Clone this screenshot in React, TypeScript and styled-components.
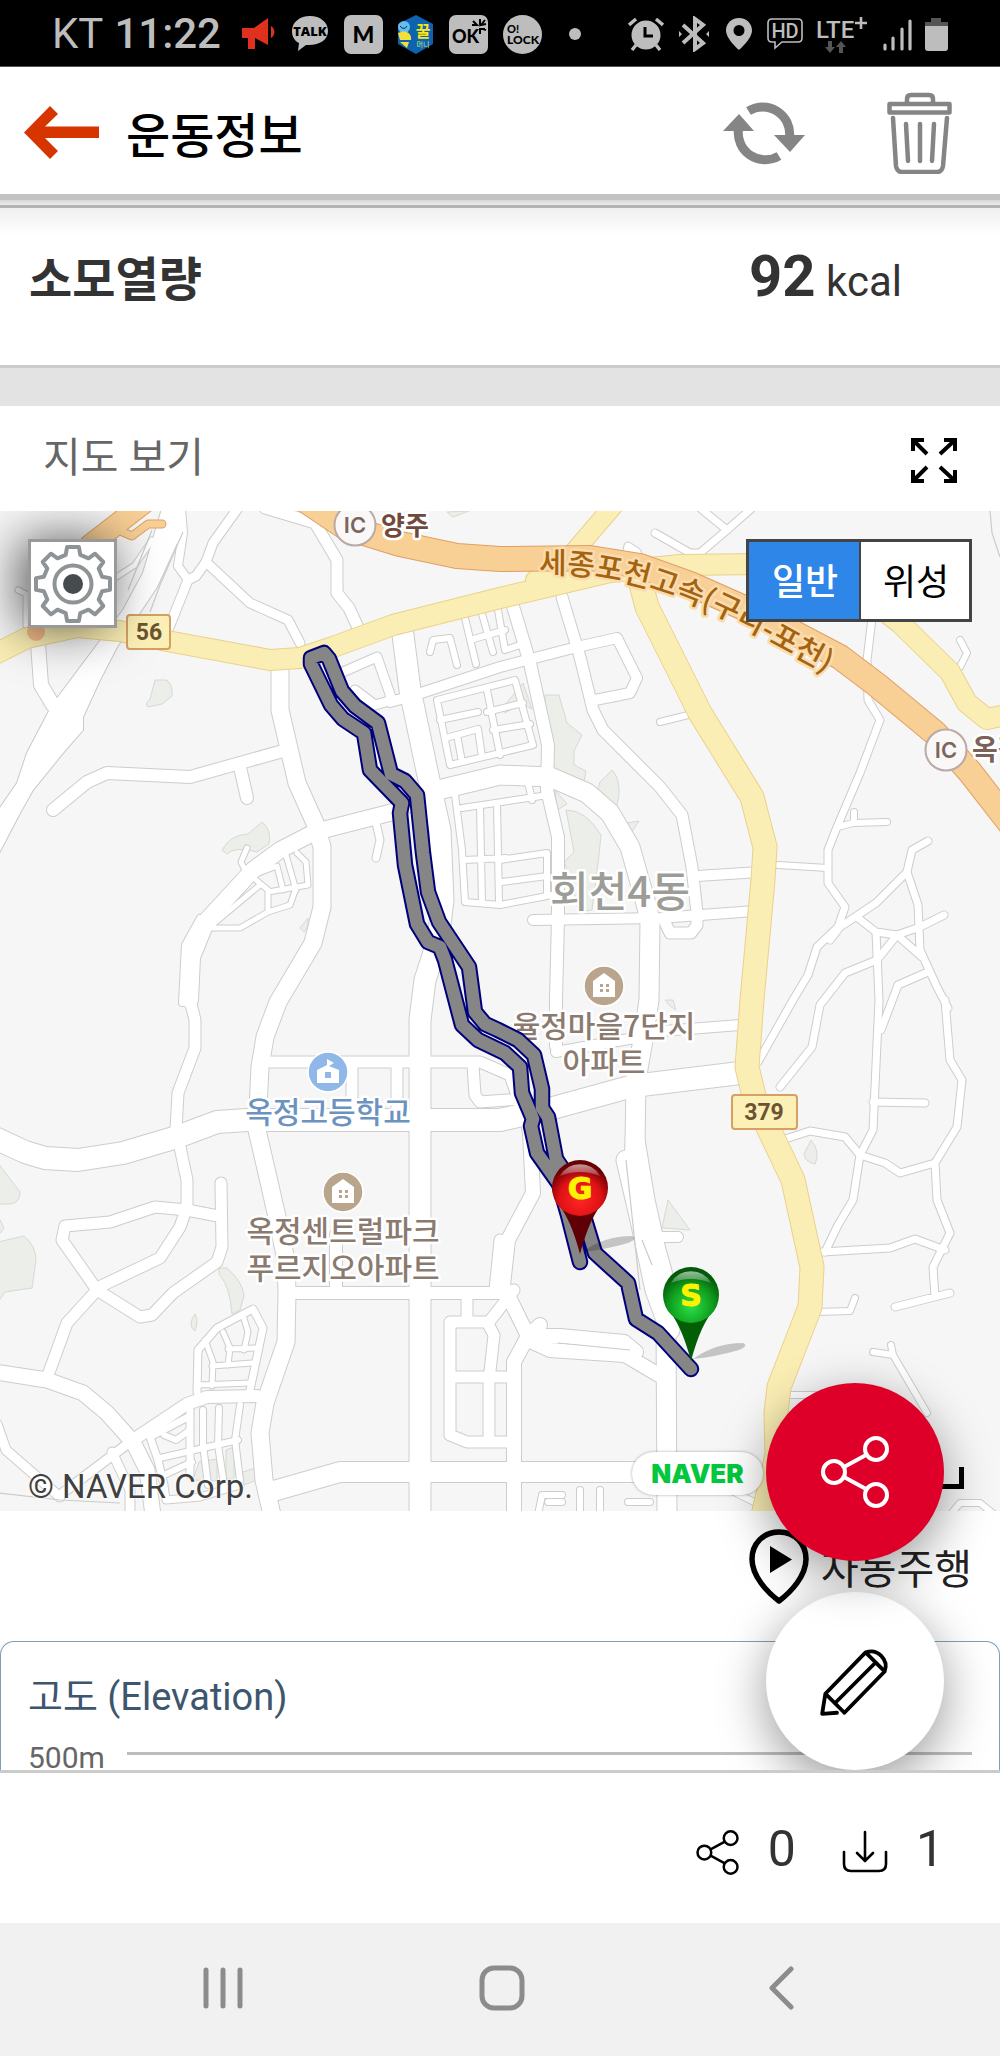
import React, { useState } from 'react';
import styled, { createGlobalStyle, css } from 'styled-components';

const sans = `Roboto, "Noto Sans CJK KR", sans-serif`;

const GlobalStyle = createGlobalStyle`
  *, *::before, *::after { box-sizing: border-box; }
  body { margin: 0; background: #fff; font-family: ${sans}; color: #333; }
  button { font: inherit; color: inherit; margin: 0; padding: 0; border: 0; background: none; cursor: pointer; }
  svg { display: block; flex: none; }
`;

/* ---------- shell ---------- */

const Screen = styled.div`
  display: flex;
  flex-direction: column;
  min-height: 100vh;
`;

const StatusBar = styled.div`
  display: flex;
  justify-content: space-between;
  align-items: center;
  height: 67px;
  padding: 2px 52px 0;
  background: #000;
  border-bottom: 1px solid #555;
  color: #bdbdbd;
  font-size: 42px;
  line-height: 48px;
`;

const StatusGroup = styled.div<{ $gap: number }>`
  display: flex;
  align-items: center;
  gap: ${(p) => p.$gap}px;
`;

const Carrier = styled.span`
  display: flex;
  gap: 11px;
  margin-right: 6px;
  strong { font-weight: 500; }
`;

const AppBar = styled.header`
  display: flex;
  align-items: center;
  height: 127px;
  padding: 4px 47px 0 24px;
  background: #fff;
`;

const Title = styled.h1`
  flex: 1;
  margin: 0 0 0 27px;
  padding-top: 8px;
  color: #000;
  font-size: 48px;
  line-height: 64px;
  font-weight: 500;
`;

const BarActions = styled.div`
  display: flex;
  align-items: center;
  gap: 82px;
`;

const BarEdge = styled.div`
  height: 14px;
  background: linear-gradient(#c3c3c3 0 6px, #d6d6d6 6px, #ececec 11px, #b3b3b3 11px 14px);
`;

const Content = styled.main`
  position: relative;
  overflow: hidden;
`;

/* ---------- sections ---------- */

const CalorieRow = styled.section`
  display: flex;
  justify-content: space-between;
  align-items: baseline;
  height: 160px;
  padding: 36px 98px 0 29px;
  border-bottom: 3px solid #cbcbcb;
  background: linear-gradient(#f0f0f0, #fff 28px);
`;

const RowLabel = styled.h2`
  margin: 0;
  font-size: 47px;
  line-height: 64px;
  font-weight: 700;
`;

const Amount = styled.p`
  margin: 0;
  font-size: 42px;
  line-height: 64px;
  strong { font-size: 58px; }
`;

const Band = styled.div`
  height: 38px;
  background: #e3e3e3;
`;

const MapHeader = styled.div`
  display: flex;
  justify-content: space-between;
  align-items: center;
  height: 105px;
  padding: 0 43px 0 43px;
  color: #666;
  h2 { margin: 0; font-size: 41px; line-height: 56px; font-weight: 400; padding-bottom: 2px; }
  button { color: #000; padding-top: 4px; }
`;

const MapFrame = styled.section`
  position: relative;
  overflow: hidden;
  > svg { width: 100%; height: auto; }
`;

const SettingsButton = styled.button`
  && {
    position: absolute;
    top: 28px;
    left: 28px;
    display: grid;
    place-items: center;
    width: 89px;
    height: 89px;
    border: 3px solid #999;
    background: #fff;
    box-shadow: -8px 0 50px rgba(0, 0, 0, 0.65);
  }
`;

const TypeSwitch = styled.div`
  position: absolute;
  top: 28px;
  right: 28px;
  display: flex;
  border: 3px solid #444;
  background: #fff;
`;

const TypeButton = styled.button<{ $on: boolean }>`
  && {
    width: 110px;
    height: 77px;
    padding: 4px 0 0 2px;
    font-size: 36px;
    line-height: 48px;
    color: #000;
    ${(p) => p.$on && css`
      background: #2e86e8;
      color: #fff;
      font-weight: 500;
    `}
    & + & { border-left: 2px solid #444; }
  }
`;

const Copyright = styled.span`
  position: absolute;
  left: 28px;
  bottom: 4px;
  font-size: 33px;
  line-height: 40px;
  color: #404040;
  text-shadow: 0 0 3px #fff, 0 0 3px #fff;
`;

const NaverLink = styled.a`
  position: absolute;
  right: 237px;
  bottom: 16px;
  width: 131px;
  height: 43px;
  border-radius: 22px;
  background: #fff;
  box-shadow: 0 0 3px rgba(0, 0, 0, 0.35);
  color: #03c73c;
  font-family: Inter, sans-serif;
  font-weight: 900;
  font-size: 26px;
  line-height: 43px;
  text-align: center;
  text-decoration: none;
`;

const ScaleBar = styled.span`
  position: absolute;
  right: 36px;
  bottom: 22px;
  width: 90px;
  height: 22px;
  border: solid #000;
  border-width: 0 5px 5px 5px;
`;

const AutoRun = styled.div`
  display: flex;
  justify-content: flex-end;
  height: 130px;
  padding: 18px 28px 0;
  button {
    display: flex;
    align-items: flex-start;
    gap: 12px;
    height: 76px;
    color: #222;
    font-size: 41px;
    line-height: 82px;
  }
`;

const ElevationCard = styled.section`
  height: 129px;
  overflow: hidden;
  padding: 31px 27px 0;
  border: 1px solid #7f9fb6;
  border-bottom: 0;
  border-radius: 14px 14px 0 0;
  h2 {
    margin: 0;
    color: #3d566e;
    font-size: 38px;
    line-height: 48px;
    font-weight: 400;
  }
`;

const AxisRow = styled.div`
  display: flex;
  gap: 22px;
  margin-top: 17px;
  color: #666;
  font-size: 30px;
  line-height: 40px;
  &::after {
    content: '';
    flex: 1;
    height: 3px;
    margin-top: 14px;
    background: #bdbdbd;
  }
`;

const Fabs = styled.div`
  position: absolute;
  right: 56px;
  bottom: 0;
  display: grid;
  gap: 31px;
`;

const Fab = styled.button<{ $primary?: boolean }>`
  && {
    position: relative;
    z-index: ${(p) => (p.$primary ? 1 : 0)};
    display: grid;
    place-items: center;
    width: 178px;
    height: 178px;
    border-radius: 50%;
    background: ${(p) => (p.$primary ? '#de0029' : '#fff')};
    color: ${(p) => (p.$primary ? '#fff' : '#000')};
    box-shadow: 0 14px 50px rgba(0, 0, 0, 0.4);
  }
`;

const Counters = styled.footer`
  display: flex;
  justify-content: flex-end;
  gap: 46px;
  height: 153px;
  padding: 46px 56px 0 0;
  border-top: 3px solid #cbcbcb;
  background: #fff;
`;

const Counter = styled.button`
  && {
    display: flex;
    align-items: flex-start;
    gap: 28px;
    height: 60px;
    font-size: 50px;
    line-height: 60px;
  }
  svg { margin-top: 11px; color: #000; }
`;

const NavBar = styled.nav`
  display: grid;
  grid-template-columns: repeat(3, 28%);
  justify-content: center;
  height: 133px;
  padding-left: 4px;
  background: #f1f1f1;
  color: #8c8c8c;
  button { display: grid; place-items: center; padding-bottom: 4px; }
`;

/* ---------- status icons ---------- */

const Horn = () => (
  <svg width="34" height="36" viewBox="0 0 34 36" fill="#e0301e">
    <path d="M0 12h12L26 2v27l-13-7v11H6V22H0zM29 10a7 7 0 0 1 0 12z" />
  </svg>
);
const Talk = () => (
  <svg width="38" height="38" viewBox="0 0 38 38">
    <path d="M19 1C9 1 1 7 1 16c0 6 3 10 7 12l-1 8 8-6c13 1 22-5 22-14S29 1 19 1z" fill="#bdbdbd" />
    <text x="19" y="21" fontSize="13" fontWeight="800" textAnchor="middle" fontFamily="Open Sans" fill="#000">TALK</text>
  </svg>
);
const Tile = ({ children }: { children: React.ReactNode }) => (
  <svg width="39" height="39" viewBox="0 0 39 39">
    <rect width="39" height="39" rx="7" fill="#bdbdbd" />
    {children}
  </svg>
);
const Honey = () => (
  <svg width="36" height="39" viewBox="0 0 36 39">
    <path d="M18 0l17 9v20l-17 10L0 29V9z" fill="#0d63b0" />
    <circle cx="6" cy="12" r="6" fill="#62bdf0" />
    <path d="M0 18c8-4 14 0 13 7H2zM2 27h9l-2 6z" fill="#f2df3a" />
    <path d="M2 11q4 5 7 0" stroke="#124" fill="none" />
    <text x="25" y="22" fontSize="16" fontWeight="700" textAnchor="middle" fontFamily="Noto Sans CJK KR" fill="#fbe516">꿀</text>
    <text x="25" y="32" fontSize="7" textAnchor="middle" fontFamily="Noto Sans CJK KR" fill="#cde57a">머니</text>
  </svg>
);
const OkMark = () => (
  <Tile>
    <text x="3" y="28" fontSize="18" fontWeight="900" fontFamily="Lato" fill="#000">OK</text>
    <path d="M24 6l4 4h-5M31 4v6M36 5l-4 5 5-1M31 19v-5h5M34 14l3 1" stroke="#000" strokeWidth="2" fill="none" />
  </Tile>
);
const LockScreen = () => (
  <svg width="39" height="39" viewBox="0 0 39 39" fontFamily="Lato" fontWeight="900">
    <circle cx="19.5" cy="19.5" r="19.5" fill="#bdbdbd" />
    <text x="4" y="18" fontSize="11">O!</text>
    <text x="4" y="29" fontSize="12">LOCK</text>
  </svg>
);
const Dot = () => (
  <svg width="36" height="12" viewBox="0 0 36 12"><circle cx="18" cy="6" r="6" fill="#bdbdbd" /></svg>
);
const Alarm = () => (
  <svg width="36" height="34" viewBox="0 0 36 34" stroke="#bdbdbd" fill="none" strokeWidth="3.4">
    <circle cx="18" cy="18" r="14.5" fill="#bdbdbd" stroke="none" />
    <path d="M1 8l7-6M35 8l-7-6M8 28l-4 5M28 28l4 5" />
    <path d="M17 10v9h8" stroke="#000" strokeWidth="3" />
  </svg>
);
const Bluetooth = () => (
  <svg width="34" height="36" viewBox="0 0 34 36" stroke="#bdbdbd" fill="none" strokeWidth="4">
    <path d="M6 9l20 18-8 6V3l8 6L6 27" />
    <path d="M2 15l3 3-3 3zM32 15l-3 3 3 3z" fill="#bdbdbd" stroke="none" />
  </svg>
);
const Place = () => (
  <svg width="30" height="34" viewBox="-1 0 30 34">
    <path fillRule="evenodd" fill="#bdbdbd" d="M14 1C6 1 1 7 1 13.500C1 22 14 33 14 33s13-11 13-19.500C27 7 22 1 14 1zm0 7a5.500 5.500 0 1 1 0 11 5.500 5.500 0 0 1 0-11z" />
  </svg>
);
const Hd = () => (
  <svg width="36" height="32" viewBox="0 0 36 32">
    <path d="M5 1h26q4 0 4 4v15q0 4-4 4H15l-7 6v-6H5q-4 0-4-4V5q0-4 4-4z" fill="none" stroke="#bdbdbd" strokeWidth="1.600" />
    <text x="18" y="20" fontSize="20" fontWeight="500" textAnchor="middle" fontFamily="Roboto" fill="#bdbdbd">HD</text>
  </svg>
);
const Lte = () => (
  <svg width="54" height="52" viewBox="0 -5 54 52" fontFamily="Roboto">
    <text x="0" y="25" fontSize="24" fontWeight="500" fill="#bdbdbd">LTE</text>
    <path d="M45 4v12M39 10h12" stroke="#bdbdbd" strokeWidth="2.600" />
    <path d="M12 28h4v6h3l-5 6-5-6h3zM23 40h4v-6h3l-5-6-5 6h3z" fill="#555" />
  </svg>
);
const Signal = () => (
  <svg width="29" height="33" viewBox="0 0 29 33" stroke="#bdbdbd" strokeWidth="3.200" strokeLinecap="round">
    <path d="M2 27v4M10 20v11M19 11v20M27 3v28" />
  </svg>
);
const Battery = () => (
  <svg width="23" height="34" viewBox="0 0 23 34">
    <path d="M6 1h10v4h7v4H0V5h6z" fill="#555" />
    <path d="M0 9h23v22q0 3-3 3H3q-3 0-3-3z" fill="#bdbdbd" />
  </svg>
);

/* ---------- app icons ---------- */

const BackArrow = () => (
  <svg width="75" height="53" viewBox="0 0 75 53">
    <path d="M0 26.500L26 0l8 8-13 12.500h54v11.500H21l13 13-8 8z" fill="#d63500" />
  </svg>
);
const Refresh = () => (
  <svg width="82" height="64" viewBox="0 0 82 64" fill="none" stroke="#858585" strokeWidth="9">
    <path d="M25.500 10A27 27 0 0 1 66.500 36" />
    <path d="M56 55A27 27 0 0 1 15.500 28" />
    <path d="M51 34h31L67 51zM0 30l16-17 15 17z" fill="#858585" stroke="none" />
  </svg>
);
const Trash = () => (
  <svg width="66" height="82" viewBox="0 0 66 82" fill="none" stroke="#858585" strokeWidth="4.500" strokeLinecap="round" strokeLinejoin="round">
    <rect x="2.500" y="12" width="60" height="8.500" />
    <path d="M20 11V7q0-4 4-4h18q4 0 4 4v4M6 26l3 48q1 6 6 6h35q5 0 6-6l4-48M19 32l2 37M33 32v37M47 32l-2 37" />
  </svg>
);
const Expand = () => (
  <svg width="46" height="45" viewBox="0 0 46 45" fill="none" stroke="#000" strokeWidth="4">
    <path d="M2 13V2h11M2 2l14 14M33 2h11v11M44 2L29 16M2 32v11h11M2 43l14-14M33 43h11V32M44 43L29 29" />
  </svg>
);
const Gear = () => {
  const teeth = [0, 45, 90, 135, 180, 225, 270, 315];
  const profile = [[-14, 30], [-9, 37.5], [9, 37.5], [14, 30]];
  const pts = teeth.flatMap((a) =>
    profile.map(([d, r]) => {
      const t = ((a + d) * Math.PI) / 180;
      return `${(40 + r * Math.sin(t)).toFixed(1)},${(40 - r * Math.cos(t)).toFixed(1)}`;
    }),
  );
  return (
    <svg width="80" height="80" viewBox="0 0 80 80" fill="none" stroke="#8e9396" strokeWidth="4" strokeLinejoin="round">
      <polygon points={pts.join(' ')} />
      <circle cx="40" cy="40" r="18.500" />
      <circle cx="40" cy="40" r="10" fill="#464b4d" stroke="none" />
    </svg>
  );
};
const Share = ({ size, stroke }: { size: number; stroke: number }) => (
  <svg width={size} height={size} viewBox="0 0 68 72" fill="none" stroke="currentColor" strokeWidth={stroke}>
    <circle cx="13" cy="36" r="11" />
    <circle cx="55" cy="13" r="11" />
    <circle cx="55" cy="59" r="11" />
    <path d="M23 31l22-12M23 41l22 12" />
  </svg>
);
const Pencil = () => (
  <svg width="72" height="72" viewBox="0 0 68 68" fill="none" stroke="#000" strokeWidth="3.600" strokeLinejoin="round" strokeLinecap="round">
    <path d="M6 46L44 7a14 14 0 0 1 18 18L24 64zM6 46L3 65l14-1M44 7l18 18M15 55l38-38" />
  </svg>
);
const PlayPin = () => (
  <svg width="60" height="75" viewBox="0 0 60 75">
    <path d="M30 3C14 3 3 15 3 30c0 17 15 33 27 42 12-9 27-25 27-42C57 15 46 3 30 3z" fill="none" stroke="#000" strokeWidth="5.500" strokeLinejoin="round" />
    <path d="M21 17v27l22-13.500z" />
  </svg>
);
const Download = () => (
  <svg width="46" height="43" viewBox="0 0 46 43" fill="none" stroke="currentColor" strokeWidth="2.600" strokeLinecap="round">
    <path d="M2 22v12q0 7 7 7h28q7 0 7-7V22M23 2v29M15 23l8 8 8-8" />
  </svg>
);

/* ---------- map ---------- */

type Road = [number, string];

const roads: Road[] = [
  [14, 'M38 643L41 685L53 705'],
  [9, 'M238 508L213 543L206 562L196 576L188 580L168 630'],
  [8, 'M188 580L178 566L183 533L181 508'],
  [9, 'M206 562L250 603L288 620L300 643'],
  [11, 'M265 508L315 523L337 560L337 593L349 608L360 632'],
  [5, 'M115 578L135 565L152 540M18 590L26 594L26 625'],
  [17, 'M280 667L280 710L287 740L297 783L315 823L322 847L322 907L313 943L297 970L278 1002L265 1037L260 1067L257 1130L267 1173L277 1217L286 1260L287 1293L286 1342L265 1403L260 1433L264 1480L272 1515'],
  [12, 'M53 810L87 782L107 773L190 777L283 751M240 767L247 798'],
  [16, 'M190 1000L192 957L207 920L253 870L280 850L315 832L393 812L430 792'],
  [19, 'M430 792L500 775L550 777L587 793L610 813L630 847L645 900L650 920L649 1000L643 1040L636 1080L635 1143L634 1163'],
  [6, 'M182 1003L185 945L200 918'],
  [11, 'M190 1000L195 1020L195 1048L178 1093L176 1130M180 1147L187 1180L187 1207L180 1227L160 1258L97 1288'],
  [11, 'M187 1210L155 1207L110 1222L65 1226L62 1240L97 1290L140 1317L152 1315L173 1293L217 1262L222 1247L221 1183M187 1210L218 1216M97 1290L67 1323L47 1378'],
  [22, 'M-5 1138L25 1152L45 1158L78 1160L123 1153L177 1137L217 1122L247 1120L500 1120L553 1108L633 1086L740 1073'],
  [15, 'M-5 1372L47 1380L83 1393L107 1413L133 1442L147 1470L153 1515'],
  [12, 'M133 1440L187 1404L207 1397L257 1396'],
  [9, 'M130 1442L60 1495M-3 1424L6 1450L60 1497M112 1452L130 1490L130 1515'],
  [21, 'M403 635L410 690L430 785L440 830L443 900L438 940L425 980L420 1020L420 1515'],
  [11, 'M270 1062L480 1062L510 1075L530 1133M473 1065L475 1095L480 1102L520 1099M352 1062L352 1110M397 1062L397 1110'],
  [12, 'M290 1293L508 1293M336 1235L336 1293'],
  [14, 'M522 1090L530 1133L533 1193L508 1240L503 1285L528 1336L514 1362L514 1515M528 1336L540 1325M528 1336L560 1336L624 1342L636 1352'],
  [14, 'M528 1340L550 1350L625 1355L664 1378'],
  [20, 'M270 1492L340 1472L500 1472L690 1472'],
  [19, 'M626 1160L640 1220L655 1290L666 1320L667 1515M635 1140L645 1200L656 1250L667 1290L670 1330'],
  [11, 'M450 1322L450 1435L467 1442L510 1442M450 1322L487 1322L494 1335L489 1380L489 1442M450 1377L514 1377M467 1298L467 1320M489 1322L514 1290M500 1240L495 1290'],
  [7, 'M197 1392L198 1350L217 1328L253 1309L263 1328L250 1390'],
  [5, 'M205 1340L213 1362L212 1386M223 1332L230 1348L228 1365M243 1315L248 1332L244 1350M212 1366L252 1363M228 1349L257 1348M198 1385L250 1383'],
  [7, 'M150 1437L188 1417M150 1437L158 1460L164 1485L166 1500L200 1497L240 1485M190 1410L190 1475'],
  [6, 'M203 1410L203 1445L208 1485M219 1408L218 1445L224 1485M240 1405L235 1440L240 1480M160 1458L238 1440M164 1475L192 1462M164 1435L176 1440L190 1430'],
  [5, 'M250 875L268 890L268 912M253 875L277 866L283 890M286 855L296 890M297 853L306 862L308 885L268 892M268 912L290 905L296 888M212 928L240 928L268 912M212 925L260 885M247 848L241 862L246 872'],
  [7, 'M376 823L380 840L376 858'],
  [9, 'M343 672L377 657L392 700L375 705L355 690'],
  [10, 'M390 702L412 696L500 667L577 647L617 638L637 678L630 693L595 700'],
  [11, 'M562 597L580 657L593 710L603 730L660 787L682 815L692 867L697 913L697 925L691 933L670 933L664 920'],
  [12, 'M512 603L530 663L548 745L547 790L558 837L558 917L556 1000L556 1046'],
  [10, 'M533 920L660 918L755 911M697 876L760 872M556 1052L640 1037M650 1032L740 1025M650 1237L678 1237'],
  [6, 'M430 652L433 640L450 638L457 665M465 618L476 664M482 614L493 652M498 610L505 650L520 645M470 640L505 630'],
  [6, 'M437 700L450 765L533 745L515 680L437 700M440 720L478 712M446 738L478 729L482 757M457 735L462 762M487 690L500 755M487 712L523 703M493 730L530 724'],
  [6, 'M455 795L462 850L465 902L500 905L552 895M462 808L548 795M464 860L506 858M480 808L482 903M497 805L499 903M528 782L532 800M500 860L547 853L547 895M502 882L547 876'],
  [7, 'M655 533L690 553L700 553L727 530L752 508M700 508L727 530M625 560L628 546L637 552L640 560'],
  [7, 'M872 618L867 660L868 700L880 720L860 773L837 827L828 850L828 883L845 907L838 927L817 947L808 975L793 1000L758 1062'],
  [6, 'M838 827L853 823L887 822M854 812L854 822M778 865L828 868M960 667L967 653L960 640M660 722L700 712'],
  [7, 'M928 841L912 850L907 872L876 903L840 927L830 940M907 872L918 905L920 950L937 987L948 1008M944 915L920 927L897 935L876 932L858 918M897 935L922 957M876 932L879 1000L873 1130L860 1155L853 1200L838 1225L825 1252'],
  [7, 'M897 935L877 960L845 973L820 1005L812 1047L780 1087M928 972L898 985L881 1030'],
  [7, 'M945 1000L950 1060L962 1080L957 1127L935 1163L937 1200L950 1233L933 1267L935 1297M895 1307L950 1293M873 1102L925 1103M785 1139L810 1131L845 1137L860 1155L885 1163L900 1173L935 1163M822 1252L890 1248L915 1239L945 1250'],
  [6, 'M815 1312L850 1311L855 1298M873 1352L893 1355L927 1413M893 1355L891 1345M785 1395L830 1395M730 1490L760 1505M950 1515L960 1503L980 1503L995 1515'],
  [6, 'M538 1515L542 1495L562 1495M548 1502L562 1502M580 1490L580 1515M600 1490L600 1515M628 1502L650 1502'],
];

const broadRoad = 'M163 505L143 573L123 610L58 697L49 711L27 753L17 783L-3 812V857L20 813L33 790L63 753L83 730L83 717L100 680L117 647L157 587L183 530L185 505Z';

const parks = [
  'M155 680h12q6 6 5 16l-10 8-14 3q-4-3 2-8z',
  'M222 850q8-15 26-16l14-12q10 8 7 22l-12 8q-22-6-30 2z',
  'M447 512l6 5 16-6z',
  'M545 695h14l8 28 15 12-8 16v14l12 6-3 16-24-8-12-20z',
  'M600 782l12-12q8 8 7 25l-3 15-20-16z',
  'M555 790l12 14-10 6zM566 810q20 0 35 25l-2 20-7 55-14 2-6-30-8-20 10-10z',
  'M627 823l12-2-8 12z',
  'M-2 1163L20 1192Q20 1203 10 1204H-2zM-2 1216l6 12-6 8zM-2 1242l26-6q12 10 12 24l-4 28-27 4-7 10z',
  'M219 1268h8q16 14 17 28l-4 14-8 4q-2-28-13-40z',
  'M195 1314q4 6 0 17-8-6 0-17z',
  'M193 1480l6-18 18-3v22zM226 1450l8-3v32h-8zM243 1472l12-4 2 12-16 6z',
  'M668 1200l22 30-28-2z',
  'M811 1140q10 12 4 24-10-2-11-10z',
  'M665 1000h8l3 10-6-4z',
  'M505 705l18-22 9 26q-10-8-27 4z',
  'M300 928l8-10v8l-4 6z',
];

const yellowRoads: Road[] = [
  [20, 'M-5 654L27 638L77 627L120 631L167 641L270 660L300 658L333 647L393 625L500 598L610 572L680 565L760 564L840 576L900 623L950 672L967 703L987 719L1010 714'],
  [18, 'M614 505L573 553L535 580'],
  [23, 'M640 580L647 607L700 713L752 797L765 847L763 880L752 1000L747 1067L755 1100L793 1180L812 1267L810 1307L779 1387L776 1413L777 1455L762 1520'],
];

const highways: Road[] = [
  [20, 'M148 500L90 545L45 600'],
  [7, 'M162 524L148 524L132 536L118 530'],
  [24, 'M290 490L345 527L400 544L457 556L500 559L590 558L640 566L690 584L760 615L840 657L877 685L935 733L970 772L1015 830'],
];

const route =
  'M691 1369L658 1333L636 1319L628 1283L595 1253L585 1220L568 1177L556 1159L548 1117L542 1108L542 1089L534 1055L518 1040L498 1030L485 1024L475 1012L469 967L439 922L428 892L423 853L417 795L405 781L391 774L378 723L355 706L342 691L329 659L324 653L311 658L311 664L331 705L343 719L364 733L370 770L402 803L400 813L405 865L417 924L428 942L440 947L445 960L462 1025L478 1040L505 1053L520 1067L522 1093L533 1119L531 1126L537 1153L559 1184L568 1215L580 1262';

const RoadSet = ({ items, edge, fill }: { items: Road[]; edge: string; fill: string }) => (
  <g fill="none" strokeLinejoin="round" strokeLinecap="round">
    {items.map(([w, d]) => <path key={`e${d}`} d={d} stroke={edge} strokeWidth={w + 2} />)}
    {items.map(([w, d]) => <path key={`f${d}`} d={d} stroke={fill} strokeWidth={w} />)}
  </g>
);

const Label = styled.text<{ $color: string; $size?: number; $halo?: string; $weight?: number }>`
  font-family: "Noto Sans CJK KR", sans-serif;
  font-size: ${(p) => p.$size ?? 30}px;
  font-weight: ${(p) => p.$weight ?? 500};
  fill: ${(p) => p.$color};
  stroke: ${(p) => p.$halo ?? '#ffffff'};
  stroke-width: 5px;
  stroke-linejoin: round;
  paint-order: stroke;
`;

const Badge = styled.text`
  font-family: Roboto, sans-serif;
  font-size: 23px;
  font-weight: 700;
  text-anchor: middle;
  fill: #6b5530;
`;

const Interchange = ({ x, y }: { x: number; y: number }) => (
  <g>
    <circle cx={x} cy={y} r="20.500" fill="#faf8f7" stroke="#b9aaa6" strokeWidth="2" />
    <text x={x} y={y + 8} textAnchor="middle" fontFamily="Inter" fontSize="22" fontWeight="600" fill="#7b6560">IC</text>
  </g>
);

const Apartment = ({ x, y }: { x: number; y: number }) => (
  <g transform={`translate(${x} ${y})`}>
    <circle r="20" fill="#b9a58c" stroke="#fff" strokeWidth="1.500" />
    <path d="M-11 11V-5L0-13 11-5V11z" fill="#fff" />
    <path d="M-4-2h3v3h-3zM2-2h3v3H2zM-4 3h3v3h-3zM2 3h3v3H2z" fill="#b9a58c" />
  </g>
);

const School = ({ x, y }: { x: number; y: number }) => (
  <g transform={`translate(${x} ${y})`}>
    <circle r="20" fill="#8fb8e8" stroke="#fff" strokeWidth="1.500" />
    <path d="M-11 11V-2L-1-7V-13L6-9 1-6 11-2V11z" fill="#fff" />
    <path d="M-3 0h6v6h-6z" fill="#8fb8e8" />
  </g>
);

const Marker = ({ x, y, letter, tone }: { x: number; y: number; letter: string; tone: string }) => (
  <g transform={`translate(${x} ${y})`}>
    <path d="M2 64Q24 48 52 48q6 3-4 7Q24 62 2 64z" fill="#000" opacity="0.2" />
    <path d="M-25 12Q-10 28 0 66 10 28 25 12z" fill={tone === 'red' ? '#5e0006' : '#035f05'} />
    <circle r="28" fill={`url(#${tone})`} />
    <path d="M-20-12A23 23 0 0 1 20-12Q0-20-20-12z" fill="url(#gloss)" />
    <text y="11" textAnchor="middle" fontFamily="DejaVu Sans" fontWeight="700" fontSize="30" fill="#fff200" stroke="#fff200" strokeWidth="1">{letter}</text>
  </g>
);

const MapDrawing = () => (
  <svg viewBox="0 511 1000 1000" role="img" aria-label="운동 경로 지도">
    <defs>
      <radialGradient id="red" cy="0.7" r="0.62"><stop offset="0" stopColor="#ff2626" /><stop offset="0.6" stopColor="#e01114" /><stop offset="1" stopColor="#6a0004" /></radialGradient>
      <radialGradient id="green" cy="0.7" r="0.62"><stop offset="0" stopColor="#2be04a" /><stop offset="0.6" stopColor="#10a01e" /><stop offset="1" stopColor="#02590a" /></radialGradient>
      <linearGradient id="gloss" x1="0" y1="0" x2="0" y2="1"><stop offset="0" stopColor="#fff" stopOpacity="0.6" /><stop offset="1" stopColor="#fff" stopOpacity="0.2" /></linearGradient>
      <path id="expressway" d="M539 574Q600 572 660 592T780 648L850 686" />
    </defs>
    <rect x="0" y="511" width="1000" height="1000" fill="#f6f6f6" />
    <g fill="#ebeee9" stroke="#d6dad2">{parks.map((d) => <path key={d} d={d} />)}</g>
    <path d={broadRoad} fill="#fff" stroke="#c9c9c9" strokeWidth="2" />
    <RoadSet items={roads} edge="#cdcdcd" fill="#fff" />
    <path d={broadRoad} fill="#fff" />
    <path d="M152 530L128 590M183 532L160 585L150 612M640 1290L626 1160M652 1265L642 1240M558 1343L630 1350M990 511L992 533L1000 557M-2 1493L60 1500L120 1503" fill="none" stroke="#cbcbcb" strokeWidth="1.200" />
    <RoadSet items={yellowRoads} edge="#ead18c" fill="#fbeeb4" />
    <RoadSet items={highways} edge="#e0a063" fill="#f8cf95" />
    <circle cx="36" cy="632" r="9" fill="#f4bd8a" />
    <Label $color="#a4630f" $halo="#fbdcae"><textPath href="#expressway">세종포천고속(구리-포천)</textPath></Label>
    <Interchange x={355} y={525} />
    <Label x="381" y="535" $size={26} $weight={700} $color="#6f4a3c">양주</Label>
    <Interchange x={946} y={750} />
    <Label x="972" y="760" $size={28} $weight={700} $color="#7a6258">옥정</Label>
    <g fill="#fdf0b6" stroke="#d6a062" strokeWidth="2">
      <rect x="127" y="615" width="43" height="34" rx="3" />
      <rect x="732" y="1095" width="65" height="34" rx="3" />
    </g>
    <Badge x="149" y="640">56</Badge>
    <Badge x="764" y="1120">379</Badge>
    <Label x="620" y="907" textAnchor="middle" $size={42} $color="#9d9d98">회천4동</Label>
    <Apartment x={604} y={986} />
    <Label x="604" y="1037" textAnchor="middle" $color="#8b7a6f">율정마을7단지</Label>
    <Label x="604" y="1073" textAnchor="middle" $color="#8b7a6f">아파트</Label>
    <School x={328} y={1072} />
    <Label x="328" y="1123" textAnchor="middle" $color="#6c93bf">옥정고등학교</Label>
    <Apartment x={343} y={1192} />
    <Label x="343" y="1242" textAnchor="middle" $color="#8b7a6f">옥정센트럴파크</Label>
    <Label x="343" y="1279" textAnchor="middle" $color="#8b7a6f">푸르지오아파트</Label>
    <g fill="none" strokeLinecap="round" strokeLinejoin="round">
      <path d={route} stroke="#00007f" strokeWidth="16.500" />
      <path d={route} stroke="#868686" strokeWidth="12.500" />
    </g>
    <Marker x={580} y={1188} letter="G" tone="red" />
    <Marker x={691} y={1295} letter="S" tone="green" />
  </svg>
);

const mapTypes = ['일반', '위성'];

export default function App() {
  const [mapType, setMapType] = useState(mapTypes[0]);
  return (
    <Screen>
      <GlobalStyle />
      <StatusBar>
        <StatusGroup $gap={15}>
          <Carrier>KT<strong>11:22</strong></Carrier>
          <Horn />
          <Talk />
          <Tile>
            <text x="19.500" y="28" fontSize="23" fontWeight="900" textAnchor="middle" fontFamily="Lato">M</text>
          </Tile>
          <Honey />
          <OkMark />
          <LockScreen />
          <Dot />
        </StatusGroup>
        <StatusGroup $gap={13}>
          <Alarm />
          <Bluetooth />
          <Place />
          <Hd />
          <Lte />
          <Signal />
          <Battery />
        </StatusGroup>
      </StatusBar>

      <AppBar>
        <button aria-label="뒤로"><BackArrow /></button>
        <Title>운동정보</Title>
        <BarActions>
          <button aria-label="새로고침"><Refresh /></button>
          <button aria-label="삭제"><Trash /></button>
        </BarActions>
      </AppBar>
      <BarEdge />

      <Content>
        <CalorieRow>
          <RowLabel>소모열량</RowLabel>
          <Amount><strong>92</strong> kcal</Amount>
        </CalorieRow>
        <Band />
        <MapHeader>
          <h2>지도 보기</h2>
          <button aria-label="전체 화면"><Expand /></button>
        </MapHeader>

        <MapFrame>
          <MapDrawing />
          <SettingsButton aria-label="지도 설정"><Gear /></SettingsButton>
          <TypeSwitch role="group" aria-label="지도 종류">
            {mapTypes.map((t) => (
              <TypeButton key={t} $on={t === mapType} aria-pressed={t === mapType} onClick={() => setMapType(t)}>{t}</TypeButton>
            ))}
          </TypeSwitch>
          <Copyright>© NAVER Corp.</Copyright>
          <NaverLink href="#naver">NAVER</NaverLink>
          <ScaleBar />
        </MapFrame>

        <AutoRun>
          <button><PlayPin />자동주행</button>
        </AutoRun>

        <ElevationCard>
          <h2>고도 (Elevation)</h2>
          <AxisRow>500m</AxisRow>
        </ElevationCard>

        <Fabs>
          <Fab $primary aria-label="공유"><Share size={72} stroke={4} /></Fab>
          <Fab aria-label="편집"><Pencil /></Fab>
        </Fabs>
      </Content>

      <Counters>
        <Counter aria-label="공유 0"><Share size={45} stroke={4} />0</Counter>
        <Counter aria-label="다운로드 1"><Download />1</Counter>
      </Counters>

      <NavBar>
        <button aria-label="최근 앱">
          <svg width="42" height="42" viewBox="0 0 42 42" stroke="currentColor" strokeWidth="5" strokeLinecap="round"><path d="M4 3v36M21 3v36M38 3v36" /></svg>
        </button>
        <button aria-label="홈">
          <svg width="46" height="46" viewBox="0 0 46 46" fill="none" stroke="currentColor" strokeWidth="5"><rect x="3" y="3" width="40" height="40" rx="12" /></svg>
        </button>
        <button aria-label="뒤로 가기">
          <svg width="26" height="44" viewBox="0 0 26 44" fill="none" stroke="currentColor" strokeWidth="5" strokeLinecap="round" strokeLinejoin="round"><path d="M23 3L4 22l19 19" /></svg>
        </button>
      </NavBar>
    </Screen>
  );
}
